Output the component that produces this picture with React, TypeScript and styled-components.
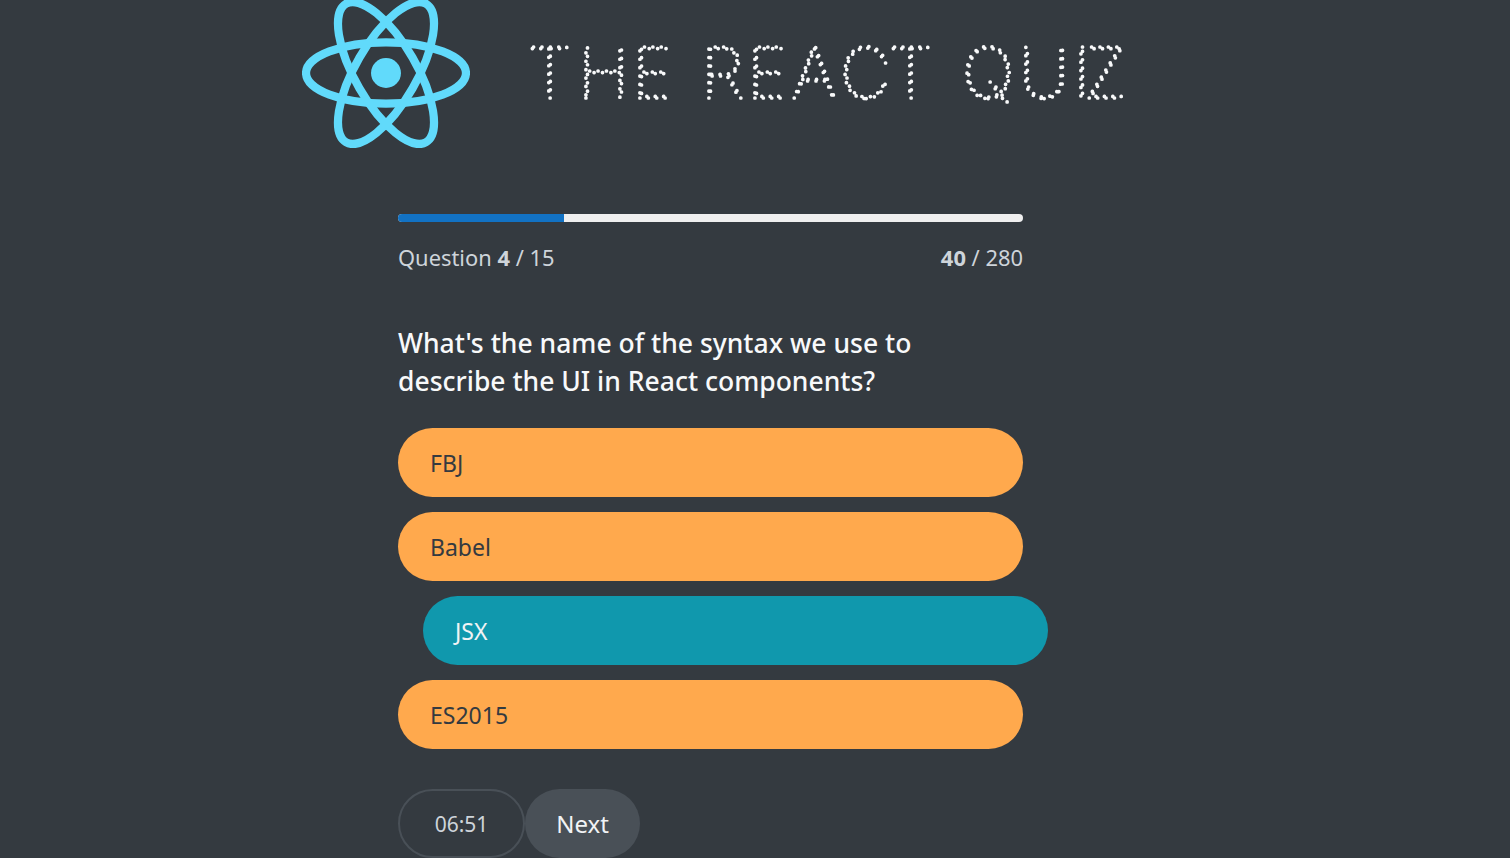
import styled, { createGlobalStyle } from "styled-components";

const GlobalStyle = createGlobalStyle`
    * {
        box-sizing: border-box;
        margin: 0;
        padding: 0;
    }

    html,
    body {
        height: 100%;
        overflow: hidden;
        background: #343a40;
    }
`;

const StyledApp = styled.div`
    width: 1510px;
    height: 858px;
    overflow: hidden;
    background: #343a40;
    font-family: "Noto Sans", "Open Sans", sans-serif;
    color: #f1f3f5;
`;

const StyledHeader = styled.header`
    display: flex;
    align-items: center;
    gap: 56px;
    height: 148px;
    margin-top: -1px;
    padding-left: 302px;
`;

const StyledTitleSvg = styled.svg`
    display: block;
    width: 610px;
    height: 80px;
    overflow: visible;
`;

const StyledTitleText = styled.text`
    font-family: "Inter", "Liberation Sans", sans-serif;
    font-weight: 100;
    font-size: 70px;
    fill: none;
    stroke: #f8f9fa;
    stroke-width: 3.7;
    stroke-linecap: round;
    stroke-dasharray: 0 8.4;
`;

const StyledMain = styled.main`
    width: 625px;
    margin-left: 398px;
    padding-top: 67px;
`;

const StyledProgressTrack = styled.div`
    height: 8px;
    border-radius: 4px;
    background: #efefef;
    overflow: hidden;
`;

const StyledProgressFill = styled.div`
    height: 100%;
    background: #1272c4;
`;

const StyledProgressInfo = styled.div`
    display: flex;
    justify-content: space-between;
    margin-top: 20px;
    font-size: 21.9px;
    line-height: 32px;
    color: #ced4da;

    strong {
        font-weight: 700;
    }
`;

const StyledQuestion = styled.h4`
    margin-top: 50px;
    max-width: 560px;
    font-size: 26.5px;
    font-weight: 500;
    line-height: 38px;
    color: #f8f9fa;
`;

const StyledOptions = styled.div`
    display: flex;
    flex-direction: column;
    gap: 15px;
    margin-top: 28px;
`;

const StyledOption = styled.button<{ $answer?: boolean }>`
    display: block;
    width: 625px;
    height: 69px;
    padding: 0 32px;
    border: none;
    border-radius: 35px;
    font-family: inherit;
    font-size: 23px;
    text-align: left;
    background: ${(p) => (p.$answer ? "#1098ad" : "#ffa94d")};
    color: ${(p) => (p.$answer ? "#f1f3f5" : "#343a40")};
    transform: ${(p) => (p.$answer ? "translateX(25px)" : "none")};
`;

const StyledFooter = styled.footer`
    display: flex;
    margin-top: 40px;
`;

const StyledTimer = styled.div`
    display: flex;
    align-items: center;
    justify-content: center;
    width: 127px;
    height: 69px;
    border: 2.5px solid #495057;
    border-radius: 35px;
    font-size: 21px;
    color: #ced4da;
`;

const StyledNext = styled.button`
    width: 115px;
    height: 69px;
    border: none;
    border-radius: 35px;
    background: #495057;
    color: #f1f3f5;
    font-family: inherit;
    font-size: 24px;
`;

const TITLE_X = "528 578 632 680 701 747 792 840 889 940 962 1019 1073 1084";

function ReactLogo() {
    return (
        <svg width="168" height="150" viewBox="-11.5 -10.27 23 20.54" fill="none" style={{ flexShrink: 0 }}>
            <circle r="2.05" fill="#61dafb" />
            <g stroke="#61dafb" strokeWidth="1.12">
                <ellipse rx="10.95" ry="4.2" />
                <ellipse rx="10.95" ry="4.2" transform="rotate(60)" />
                <ellipse rx="10.95" ry="4.2" transform="rotate(120)" />
            </g>
        </svg>
    );
}

const options = ["FBJ", "Babel", "JSX", "ES2015"];

export default function App() {
    const x = TITLE_X.split(" ")
        .map((v) => Number(v) - 526)
        .join(" ");

    return (
        <StyledApp>
            <GlobalStyle />
            <StyledHeader>
                <ReactLogo />
                <StyledTitleSvg viewBox="0 0 610 80" role="img">
                    <StyledTitleText x={x} y="65">
                        THE REACT QUIZ
                    </StyledTitleText>
                </StyledTitleSvg>
            </StyledHeader>
            <StyledMain>
                <StyledProgressTrack>
                    <StyledProgressFill style={{ width: `${Math.floor((4 / 15) * 625)}px` }} />
                </StyledProgressTrack>
                <StyledProgressInfo>
                    <span>
                        Question <strong>4</strong> / 15
                    </span>
                    <span>
                        <strong>40</strong> / 280
                    </span>
                </StyledProgressInfo>
                <StyledQuestion>What's the name of the syntax we use to describe the UI in React components?</StyledQuestion>
                <StyledOptions>
                    {options.map((option) => (
                        <StyledOption key={option} $answer={option === "JSX"}>
                            {option}
                        </StyledOption>
                    ))}
                </StyledOptions>
                <StyledFooter>
                    <StyledTimer>06:51</StyledTimer>
                    <StyledNext>Next</StyledNext>
                </StyledFooter>
            </StyledMain>
        </StyledApp>
    );
}
